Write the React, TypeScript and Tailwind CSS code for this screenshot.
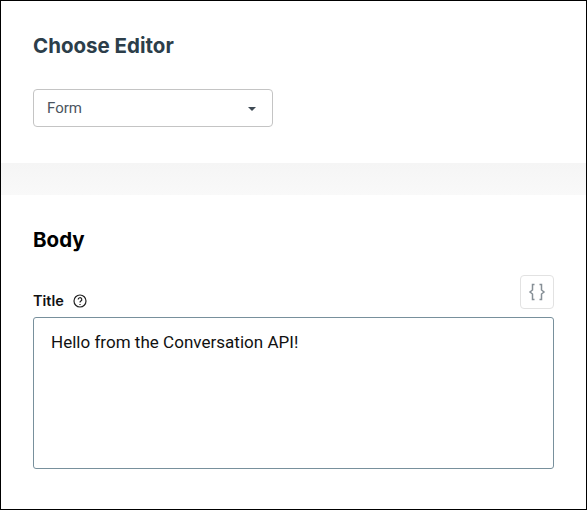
import React from 'react';

const App = () => {
  return (
    <div className="w-[587px] h-[510px] border border-black bg-white overflow-hidden font-['Roboto',sans-serif]">
      <div className="h-[162px] pt-[32px] pl-[32px]">
        <h2 className="font-['Inter',sans-serif] text-[20.5px] leading-[26px] font-bold text-[#2c3e4a]">Choose Editor</h2>
        <div className="mt-[30px] w-[240px] h-[38px] flex items-center justify-between pl-[13px] pr-[16px] border border-[#c4c4c4] rounded-[4px]">
          <span className="text-[15px] text-[#4b5560]">Form</span>
          <svg width="8" height="4" viewBox="0 0 8 4" className="mt-[1px]">
            <path d="M0 0h8L4 4z" fill="#3e4a54" />
          </svg>
        </div>
      </div>
      <div className="h-[32px] bg-gradient-to-b from-[#f5f5f5] to-[#f9f9f9]" />
      <div className="pt-[32px] px-[32px]">
        <h2 className="font-['Inter',sans-serif] text-[20.5px] leading-[26px] font-bold text-black">Body</h2>
        <div className="mt-[22px] flex items-end justify-between">
          <div className="flex items-center gap-[9px] pb-[7px]">
            <span className="font-['Inter',sans-serif] text-[14.5px] leading-[18px] font-semibold text-[#111]">Title</span>
            <svg width="14" height="14" viewBox="0 0 14 14" fill="none" stroke="#222" strokeWidth="1.2">
              <circle cx="7" cy="7" r="6" />
              <path d="M5.2 5.6a1.8 1.8 0 1 1 2.7 1.5c-.6.4-.9.7-.9 1.3" />
              <path d="M7 9.900v1" />
            </svg>
          </div>
          <div className="w-[34px] h-[34px] mb-[8px] flex items-center justify-center border border-[#e2e2e2] rounded-[4px]">
            <svg width="18" height="18" viewBox="0 0 18 18" fill="none" stroke="#868f96" strokeWidth="1.5">
              <path d="M6.500 1.500H4.500v5.500L2 9l2.500 2v5.500h2" />
              <path d="M11.500 1.500h2v5.500L16 9l-2.500 2v5.500h-2" />
            </svg>
          </div>
        </div>
        <div className="w-[521px] h-[152px] border border-[#78909c] rounded-[3px] pt-[13px] px-[17px]">
          <p className="text-[17px] leading-[22px] tracking-[0.02px] text-[#111]">Hello from the Conversation API!</p>
        </div>
      </div>
    </div>
  );
};

export default App;
